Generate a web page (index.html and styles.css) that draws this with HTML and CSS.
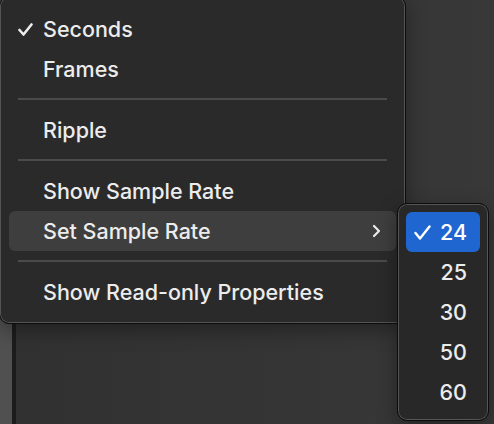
FILE: index.html
```html
<!DOCTYPE html>
<html lang="en">
<head>
    <meta charset="UTF-8">
    <meta name="viewport" content="width=device-width, initial-scale=1.0">
    <title>Menu</title>
    <link rel="stylesheet" href="styles.css">
</head>
<body>
    <div class="window">
        <div class="sideStrip"></div>
        <div class="mainArea"></div>
    </div>

    <div class="menu">
        <div class="item">
            <span class="check">
                <svg width="15" height="13" viewBox="0 0 15 13"><polyline points="1.5,7 5.5,11.5 13.5,1.5" fill="none" stroke="#ececec" stroke-width="2.6" stroke-linecap="round" stroke-linejoin="round"/></svg>
            </span>
            <span class="label">Seconds</span>
        </div>
        <div class="item"><span class="check"></span><span class="label">Frames</span></div>
        <div class="sep"></div>
        <div class="item"><span class="check"></span><span class="label">Ripple</span></div>
        <div class="sep"></div>
        <div class="item"><span class="check"></span><span class="label">Show Sample Rate</span></div>
        <div class="item active">
            <span class="check"></span>
            <span class="label">Set Sample Rate</span>
            <span class="chevron">
                <svg width="9" height="14" viewBox="0 0 9 14"><polyline points="2,2 7,7 2,12" fill="none" stroke="#ececec" stroke-width="2.2" stroke-linecap="round" stroke-linejoin="round"/></svg>
            </span>
        </div>
        <div class="sep"></div>
        <div class="item"><span class="check"></span><span class="label">Show Read-only Properties</span></div>
    </div>

    <div class="submenu">
        <div class="subItem selected">
            <svg width="17" height="15" viewBox="0 0 17 15"><polyline points="1.5,8 6,13.5 15.5,1.5" fill="none" stroke="#fff" stroke-width="2.4" stroke-linecap="round" stroke-linejoin="round"/></svg>
            <span class="num">24</span>
        </div>
        <div class="subItem"><span class="num">25</span></div>
        <div class="subItem"><span class="num">30</span></div>
        <div class="subItem"><span class="num">50</span></div>
        <div class="subItem"><span class="num">60</span></div>
    </div>
</body>
</html>
```

FILE: styles.css
```css
*{
    padding: 0;
    margin: 0;
    box-sizing: border-box;
}
body{
    width: 494px;
    height: 424px;
    overflow: hidden;
    background-color: #353535;
    font-family: Inter, "Liberation Sans", sans-serif;
    color: #ececec;
}
.window{
    display: flex;
    height: 424px;
}
.sideStrip{
    width: 16px;
    background-color: #505050;
    border-right: 4px solid #1c1c1c;
}
.mainArea{
    flex: 1;
    background: linear-gradient(90deg, #313131, #383838);
}

/* main menu */
.menu{
    position: absolute;
    left: -1px;
    top: -4px;
    width: 407px;
    padding: 12px 9px 11px 9px;
    background-color: #2a2a2a;
    border-radius: 10px;
    border: 1px solid #0c0c0c;
    box-shadow: inset 0 0 0 1px #555, 0 6px 20px rgba(0, 0, 0, 0.35);
}
.item{
    display: flex;
    align-items: center;
    height: 40px;
    border-radius: 6px;
    font-size: 21.5px;
    font-weight: 500;
}
.item.active{
    background-color: #3e3e3e;
}
.check{
    width: 34px;
    display: flex;
    justify-content: flex-end;
    padding-right: 10px;
}
.label{
    flex: 1;
}
.chevron{
    display: flex;
    padding-right: 15px;
}
.sep{
    height: 2px;
    margin: 9px 9px 10px 9px;
    background-color: #4b4b4b;
}

/* submenu */
.submenu{
    position: absolute;
    left: 397px;
    top: 203px;
    width: 92px;
    padding: 8px 8px 8px 8px;
    background-color: #282828;
    border-radius: 10px;
    border: 1px solid #0c0c0c;
    box-shadow: inset 0 0 0 1px #555, 0 6px 20px rgba(0, 0, 0, 0.35);
}
.subItem{
    display: flex;
    align-items: center;
    justify-content: flex-end;
    height: 40px;
    padding-right: 13px;
    border-radius: 6px;
    font-size: 21.5px;
    font-weight: 500;
}
.subItem svg{
    margin-right: 9px;
}
.subItem.selected{
    background-color: #1f66d0;
    color: #fff;
}
```
